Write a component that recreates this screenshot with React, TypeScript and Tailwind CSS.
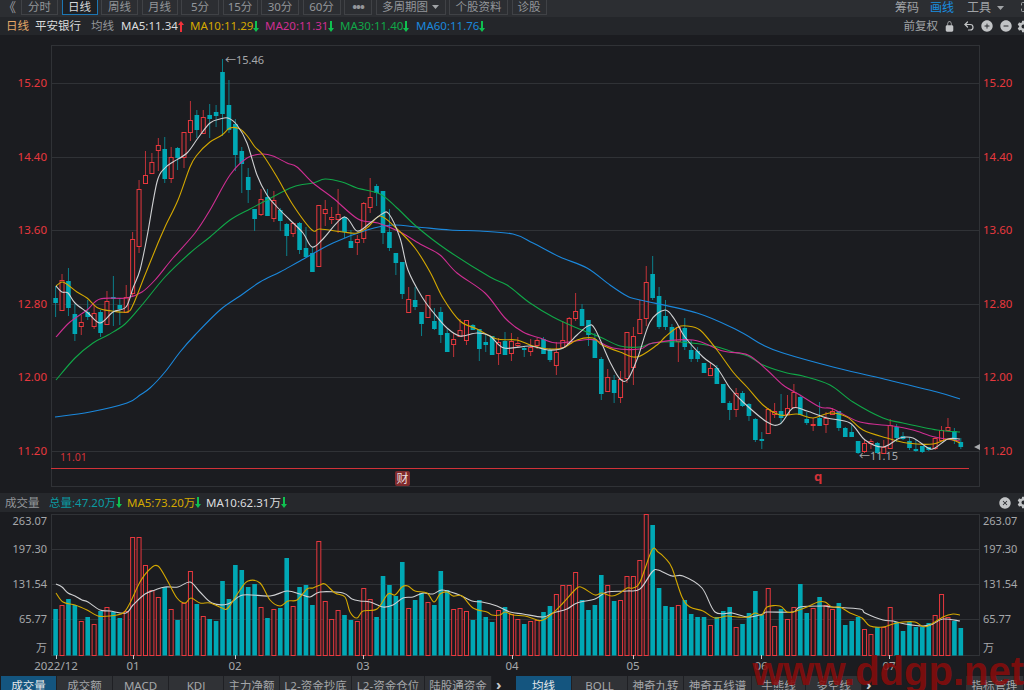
import { FC, ReactNode } from "react";
import { Maximize, Undo2 } from "lucide-react";
import {
  IoAddCircle,
  IoCloseCircle,
  IoLockClosed,
  IoRemoveCircle,
  IoSettingsSharp,
} from "react-icons/io5";

type Pt = [number, number];

const RED = "#e8383e";
const CYAN = "#00a8b5";
const CYAN_WICK = "#0b7f8a";
const BG = "#1b1c20";
const FONT = { fontFamily: '"Noto Sans","Noto Sans CJK SC",sans-serif' };

const barX = (i: number) => 55.6 + 6.42 * i;

// high, body top, body bottom, low, 1 = up (red)
const candles: [number, number, number, number, number][] = [
  [286, 298, 303, 317, 0], [274, 280, 310, 310, 1], [268, 281, 308, 316, 0], [304, 314, 334, 341, 0],
  [315, 322, 326, 335, 1], [300, 312, 317, 320, 0], [305, 313, 326, 329, 1], [310, 312, 333, 337, 0],
  [291, 301, 324, 324, 1], [276, 297, 299, 326, 0], [298, 305, 309, 325, 0], [285, 297, 312, 312, 1],
  [232, 239, 293, 297, 1], [180, 189, 246, 253, 1], [151, 175, 183, 184, 1], [153, 162, 173, 174, 1],
  [138, 145, 150, 171, 1], [137, 149, 179, 183, 0], [147, 157, 178, 183, 1], [147, 148, 158, 170, 0],
  [132, 132, 157, 168, 1], [101, 120, 132, 141, 1], [110, 115, 130, 138, 0], [110, 117, 133, 134, 1],
  [104, 115, 119, 138, 0], [105, 112, 116, 127, 0], [59, 72, 114, 136, 0], [80, 105, 130, 133, 0],
  [119, 124, 155, 171, 0], [147, 151, 164, 193, 0], [168, 177, 190, 203, 0], [209, 209, 219, 231, 0],
  [189, 199, 214, 216, 1], [189, 197, 216, 216, 0], [191, 200, 218, 222, 1], [208, 210, 221, 231, 0],
  [223, 224, 236, 256, 0], [222, 223, 233, 237, 1], [222, 223, 250, 254, 0], [227, 248, 257, 257, 0],
  [247, 253, 272, 272, 0], [205, 205, 266, 266, 1], [200, 209, 213, 226, 1], [207, 217, 219, 224, 1],
  [189, 214, 219, 233, 1], [216, 217, 232, 238, 0], [230, 241, 248, 248, 0], [235, 239, 242, 255, 1],
  [202, 203, 238, 243, 1], [178, 197, 207, 213, 1], [184, 186, 193, 206, 0], [191, 191, 233, 244, 0],
  [209, 232, 248, 251, 0], [253, 253, 263, 275, 0], [262, 262, 294, 299, 0], [287, 299, 312, 312, 1],
  [287, 300, 307, 310, 0], [312, 312, 324, 336, 0], [295, 295, 317, 317, 1], [308, 321, 329, 330, 0],
  [307, 312, 335, 343, 0], [329, 333, 352, 352, 0], [333, 339, 344, 357, 1], [319, 330, 336, 336, 1],
  [320, 320, 340, 345, 1], [324, 325, 330, 330, 0], [329, 329, 349, 361, 0], [335, 342, 345, 352, 0],
  [336, 336, 355, 355, 0], [338, 342, 353, 365, 1], [332, 341, 355, 355, 0], [333, 341, 353, 361, 1],
  [337, 343, 345, 348, 1], [347, 348, 350, 357, 0], [339, 347, 351, 356, 1], [338, 340, 345, 349, 1],
  [337, 339, 354, 354, 0], [348, 350, 360, 362, 0], [342, 352, 365, 375, 1], [321, 340, 347, 347, 1],
  [317, 318, 343, 343, 1], [293, 311, 318, 321, 1], [304, 309, 326, 326, 0], [320, 320, 335, 346, 0],
  [333, 339, 358, 358, 0], [357, 359, 394, 400, 0], [369, 377, 391, 391, 1], [375, 380, 393, 403, 0],
  [371, 379, 397, 403, 1], [332, 332, 378, 383, 1], [327, 336, 367, 385, 1], [300, 319, 333, 334, 1],
  [266, 282, 318, 326, 1], [256, 274, 298, 300, 0], [287, 296, 327, 329, 0], [300, 316, 327, 330, 0],
  [324, 327, 347, 347, 0], [327, 327, 341, 362, 1], [318, 328, 347, 350, 0], [340, 350, 359, 362, 0],
  [347, 351, 359, 362, 0], [363, 363, 373, 373, 0], [363, 368, 375, 375, 1], [365, 368, 384, 384, 0],
  [384, 384, 403, 403, 0], [401, 403, 410, 420, 0], [388, 393, 409, 417, 1], [391, 393, 406, 407, 0],
  [403, 404, 416, 421, 0], [418, 419, 440, 442, 0], [432, 439, 441, 449, 0], [408, 409, 433, 434, 1],
  [403, 411, 414, 418, 1], [394, 411, 418, 424, 0], [395, 408, 414, 414, 1], [384, 392, 407, 407, 1],
  [395, 397, 415, 415, 0], [412, 419, 423, 425, 0], [418, 424, 425, 431, 1], [402, 418, 426, 426, 0],
  [412, 418, 424, 433, 1], [408, 411, 414, 414, 1], [411, 411, 428, 431, 0], [427, 428, 437, 437, 0],
  [425, 432, 437, 437, 0], [441, 441, 453, 454, 0], [440, 443, 451, 453, 1], [439, 441, 443, 449, 1],
  [442, 443, 453, 453, 0], [440, 447, 453, 454, 1], [419, 425, 448, 448, 1], [424, 427, 438, 442, 0],
  [432, 436, 439, 440, 0], [437, 441, 448, 450, 0], [440, 449, 451, 452, 0], [446, 446, 452, 453, 0],
  [447, 447, 450, 451, 0], [437, 438, 448, 450, 1], [426, 430, 440, 440, 1], [418, 427, 430, 430, 1],
  [428, 431, 440, 444, 0], [438, 442, 447, 449, 0],
];

const ma5: Pt[] = [
  [56, 286], [62, 292], [68, 293], [75, 303], [88, 313], [100, 323], [113, 312], [126, 307], [133, 288], [140, 270],
  [147, 237], [157, 182], [165, 168], [173, 162], [187, 153], [198, 138], [210, 123], [220, 119], [228, 118], [237, 125],
  [247, 143], [257, 175], [267, 195], [277, 207], [290, 220], [303, 233], [312, 247], [323, 239], [344, 217], [357, 231],
  [370, 223], [382, 214], [389, 214], [400, 238], [408, 270], [422, 297], [433, 312], [447, 328], [460, 336], [477, 333],
  [490, 336], [504, 348], [530, 346], [548, 350], [563, 348], [577, 335], [588, 326], [595, 329], [610, 362], [620, 379],
  [628, 379], [638, 357], [650, 322], [665, 310], [675, 320], [685, 337], [703, 357], [717, 368], [730, 388], [743, 402],
  [767, 422], [780, 424], [793, 408], [807, 411], [827, 418], [850, 423], [865, 440], [883, 447], [900, 438], [913, 438],
  [928, 448], [935, 448], [948, 439], [960, 439],
];
const ma10: Pt[] = [
  [56, 286], [62, 282], [68, 285], [77, 292], [87, 298], [98, 308], [112, 311], [127, 312], [133, 305], [145, 275],
  [158, 243], [165, 227], [178, 200], [190, 167], [197, 155], [210, 142], [222, 135], [230, 128], [240, 129], [248, 137],
  [255, 147], [263, 155], [277, 177], [293, 205], [312, 230], [320, 229], [343, 232], [357, 233], [368, 227], [380, 216],
  [395, 227], [415, 248], [430, 272], [443, 298], [460, 321], [477, 329], [497, 339], [517, 340], [533, 346], [550, 349],
  [563, 348], [577, 340], [593, 338], [602, 345], [620, 352], [637, 357], [657, 345], [665, 337], [678, 327], [687, 326],
  [700, 330], [717, 350], [733, 372], [747, 387], [763, 405], [780, 415], [797, 414], [813, 418], [830, 413], [847, 417],
  [863, 430], [887, 438], [907, 443], [933, 444], [948, 439], [960, 443],
];
const ma20: Pt[] = [
  [56, 337], [70, 322], [87, 310], [100, 299], [127, 298], [142, 292], [155, 280], [173, 258], [195, 233], [210, 210],
  [230, 175], [247, 158], [262, 154], [273, 156], [287, 163], [297, 167], [313, 183], [333, 198], [358, 219], [378, 223],
  [400, 232], [422, 245], [440, 255], [457, 273], [485, 293], [505, 318], [523, 332], [540, 338], [557, 343], [583, 340],
  [595, 340], [613, 348], [640, 349], [653, 343], [693, 340], [723, 351], [748, 355], [767, 370], [783, 385], [800, 395],
  [820, 407], [833, 409], [860, 422], [893, 426], [913, 430], [935, 437], [960, 441],
];
const ma30: Pt[] = [
  [56, 380], [75, 358], [93, 343], [108, 335], [125, 324], [142, 305], [165, 277], [190, 253], [210, 237], [230, 220],
  [250, 209], [267, 200], [293, 187], [313, 183], [325, 179], [342, 182], [357, 188], [380, 194], [397, 208], [417, 227],
  [447, 250], [490, 277], [507, 285], [530, 303], [553, 317], [577, 328], [600, 337], [620, 346], [640, 347], [653, 343],
  [680, 342], [713, 346], [733, 352], [748, 356], [763, 365], [787, 373], [803, 376], [830, 385], [853, 402], [883, 418],
  [903, 423], [937, 430], [960, 432],
];
const ma60: Pt[] = [
  [55, 417], [90, 412], [127, 403], [140, 395], [150, 388], [165, 372], [180, 352], [195, 335], [220, 310], [240, 296],
  [260, 282], [280, 272], [300, 261], [333, 243], [367, 230], [393, 225], [417, 227], [450, 230], [480, 231], [513, 234],
  [533, 243], [560, 257], [587, 268], [610, 285], [627, 296], [640, 300], [697, 313], [737, 330], [763, 345], [783, 353],
  [833, 367], [880, 378], [937, 392], [960, 399],
];

// top of bar, 1 = red
const volumes: [number, number][] = [
  [609, 0], [605, 1], [599, 0], [605, 0], [621, 1], [617, 0], [624, 1], [611, 0], [607, 1], [612, 0],
  [618, 0], [611, 1], [537, 1], [537, 1], [565, 1], [590, 1], [597, 1], [587, 0], [609, 1], [620, 0],
  [603, 1], [571, 1], [604, 0], [616, 1], [619, 0], [621, 0], [581, 0], [599, 0], [565, 0], [570, 0],
  [587, 0], [584, 0], [607, 1], [618, 0], [609, 1], [608, 0], [558, 0], [606, 1], [587, 0], [585, 0],
  [605, 0], [541, 1], [601, 1], [619, 1], [610, 1], [615, 0], [620, 0], [621, 1], [588, 1], [599, 1],
  [617, 0], [576, 0], [585, 0], [596, 0], [562, 0], [608, 1], [600, 0], [593, 0], [602, 1], [605, 0],
  [571, 0], [590, 0], [609, 1], [608, 1], [611, 1], [620, 0], [600, 0], [617, 0], [622, 0], [610, 1],
  [607, 0], [614, 1], [619, 1], [624, 0], [621, 1], [620, 1], [612, 0], [606, 0], [594, 1], [585, 1],
  [585, 1], [572, 1], [600, 0], [610, 0], [605, 0], [575, 0], [585, 1], [601, 0], [600, 1], [576, 1],
  [576, 1], [560, 1], [514, 1], [525, 0], [588, 0], [606, 0], [607, 0], [605, 1], [600, 0], [614, 0],
  [617, 0], [617, 0], [625, 1], [617, 0], [611, 0], [607, 0], [627, 1], [624, 0], [613, 0], [591, 0],
  [615, 0], [588, 1], [626, 1], [609, 0], [619, 1], [607, 1], [584, 0], [613, 0], [608, 1], [597, 0],
  [605, 1], [609, 1], [603, 0], [625, 0], [621, 0], [617, 0], [629, 1], [634, 1], [627, 0], [627, 1],
  [607, 1], [622, 0], [631, 0], [622, 0], [627, 0], [627, 0], [623, 0], [615, 1], [594, 1], [617, 1],
  [621, 0], [628, 0],
];

const volMa5: Pt[] = [
  [56, 593], [63, 602], [75, 605], [87, 610], [98, 616], [110, 616], [123, 613], [130, 603], [140, 582], [150, 569],
  [158, 566], [167, 580], [177, 598], [185, 603], [191, 598], [200, 603], [210, 603], [222, 608], [228, 608], [240, 590],
  [248, 581], [260, 583], [270, 600], [280, 606], [288, 601], [297, 600], [307, 589], [313, 588], [320, 585], [325, 584],
  [335, 593], [345, 597], [350, 612], [357, 618], [363, 611], [377, 609], [388, 594], [395, 595], [402, 587], [408, 586],
  [415, 591], [427, 593], [434, 602], [440, 594], [447, 592], [453, 596], [462, 596], [473, 608], [487, 612], [492, 615],
  [500, 615], [505, 612], [513, 615], [525, 616], [537, 620], [543, 620], [553, 613], [563, 603], [577, 588], [583, 588],
  [595, 595], [602, 593], [612, 596], [620, 593], [627, 588], [633, 588], [640, 582], [652, 550], [658, 552], [665, 558],
  [672, 568], [682, 597], [690, 607], [703, 611], [715, 618], [727, 616], [737, 617], [748, 617], [755, 613], [762, 615],
  [767, 607], [780, 606], [787, 612], [793, 612], [807, 607], [818, 602], [825, 602], [832, 607], [840, 607], [850, 613],
  [862, 618], [870, 626], [883, 627], [893, 624], [903, 622], [915, 622], [922, 626], [928, 626], [943, 617], [953, 614],
  [960, 615],
];
const volMa10: Pt[] = [
  [56, 584], [62, 587], [68, 593], [75, 596], [82, 600], [88, 602], [100, 610], [110, 611], [126, 613], [133, 605],
  [145, 594], [155, 590], [165, 587], [178, 587], [190, 582], [200, 592], [212, 603], [228, 604], [243, 595], [270, 596],
  [287, 591], [300, 594], [310, 597], [320, 592], [343, 593], [352, 599], [360, 601], [370, 602], [383, 607], [393, 605],
  [403, 598], [413, 597], [423, 593], [433, 594], [442, 590], [457, 594], [472, 601], [482, 602], [497, 606], [510, 612],
  [523, 614], [543, 617], [553, 613], [567, 609], [577, 603], [595, 599], [607, 592], [627, 591], [640, 589], [652, 572],
  [658, 570], [672, 576], [683, 576], [702, 588], [715, 612], [732, 613], [748, 617], [763, 614], [767, 612], [793, 612],
  [800, 607], [823, 606], [832, 607], [860, 609], [865, 613], [883, 620], [893, 621], [905, 624], [923, 626], [933, 624],
  [943, 619], [960, 621],
];

const priceLabels: [string, number][] = [
  ["15.20", 83], ["14.40", 157], ["13.60", 230], ["12.80", 304], ["12.00", 377], ["11.20", 451],
];
const volumeLabels: [string, number][] = [
  ["263.07", 521], ["197.30", 549], ["131.54", 584], ["65.77", 619], ["万", 648],
];
const dates: [string, number][] = [
  ["2022/12", 56], ["01", 133], ["02", 235], ["03", 363], ["04", 512], ["05", 633], ["06", 761], ["07", 889],
];

// catmull-rom through the points so the averages don't look angular
const smooth = (pts: Pt[]) => {
  let d = `M${pts[0][0]} ${pts[0][1]}`;
  for (let i = 0; i < pts.length - 1; i++) {
    const p0 = pts[Math.max(i - 1, 0)];
    const p1 = pts[i];
    const p2 = pts[i + 1];
    const p3 = pts[Math.min(i + 2, pts.length - 1)];
    const c1x = p1[0] + (p2[0] - p0[0]) / 6;
    const c1y = p1[1] + (p2[1] - p0[1]) / 6;
    const c2x = p2[0] - (p3[0] - p1[0]) / 6;
    const c2y = p2[1] - (p3[1] - p1[1]) / 6;
    d += `C${c1x.toFixed(1)} ${c1y.toFixed(1)} ${c2x.toFixed(1)} ${c2y.toFixed(1)} ${p2[0]} ${p2[1]}`;
  }
  return d;
};

const Line: FC<{ points: Pt[]; color: string }> = ({ points, color }) => (
  <path d={smooth(points)} fill="none" stroke={color} strokeWidth={1.1} strokeLinejoin="round" />
);

const Arrow: FC<{ up?: boolean }> = ({ up }) => (
  <svg width="6" height="11" viewBox="0 0 6 11" className="shrink-0">
    <path
      d={up ? "M3 0 6 4H4V11H2V4H0Z" : "M2 0H4V7H6L3 11 0 7H2Z"}
      fill={up ? "#f0323a" : "#0fc050"}
    />
  </svg>
);

const ToolButton: FC<{ w: string; active?: boolean; children: ReactNode }> = ({ w, active, children }) => (
  <div
    className={`${w} flex h-[15px] shrink-0 items-center justify-center gap-1 border border-t-0 ${
      active ? "border-[#1c76b3] bg-[#1d2024] text-[#d6d8da]" : "border-[#404246] text-[#93969a]"
    }`}
  >
    {children}
  </div>
);

const Tab: FC<{ w: string; active?: boolean; children: ReactNode }> = ({ w, active, children }) => (
  <div
    className={`${w} h-[18px] shrink-0 border-r border-[#1f2024] pt-[1px] text-center leading-[18px] ${
      active ? "bg-[#14557f] text-[#e6e8ea]" : "bg-[#303236] text-[#a4a6a9]"
    }`}
  >
    {children}
  </div>
);

const Toolbar = () => (
  <div className="flex h-[17px] items-start bg-[#2c2e32] text-[11.5px] leading-none">
    <span className="ml-[3px] w-[18px] shrink-0 text-[13px] leading-[14px] text-[#9a9da1]">《</span>
    <div className="flex gap-[3.5px]">
      <ToolButton w="w-[37px]">分时</ToolButton>
      <ToolButton w="w-[36px]" active>日线</ToolButton>
      <ToolButton w="w-[37px]">周线</ToolButton>
      <ToolButton w="w-[36px]">月线</ToolButton>
      <ToolButton w="w-[38px]">5分</ToolButton>
      <ToolButton w="w-[35px]">15分</ToolButton>
      <ToolButton w="w-[38px]">30分</ToolButton>
      <ToolButton w="w-[38px]">60分</ToolButton>
      <ToolButton w="w-[28px]">
        <span className="text-[13px] font-bold leading-none tracking-[-1px]">•••</span>
      </ToolButton>
      <ToolButton w="w-[70px]">
        多周期图
        <svg width="7" height="4" viewBox="0 0 7 4"><path d="M0 0H7L3.5 4Z" fill="#a0a3a6" /></svg>
      </ToolButton>
      <ToolButton w="w-[59px]">个股资料</ToolButton>
      <ToolButton w="w-[35px]">诊股</ToolButton>
    </div>
    <div className="ml-auto flex items-center text-[12px] text-[#a0a3a6]">
      <span className="mr-[11px] leading-[15px]">筹码</span>
      <span className="mr-[13px] leading-[15px] text-[#1a8fe0]">画线</span>
      <span className="leading-[15px]">工具</span>
      <svg width="7" height="4" viewBox="0 0 7 4" className="ml-[6px] mr-[16px]"><path d="M0 0H7L3.5 4Z" fill="#a0a3a6" /></svg>
      <Maximize size={12} className="-mr-[8px] -mt-[2px]" />
    </div>
  </div>
);

const InfoBar = () => (
  <div className="flex h-[18px] items-center bg-[#24262a] pl-[6px] text-[11.5px] leading-none">
    <span className="w-[29px] text-[#e4a868]">日线</span>
    <span className="w-[56px] text-[#dadcdd]">平安银行</span>
    <span className="w-[30px] text-[#94979b]">均线</span>
    <span className="flex w-[69px] items-center text-[#dcdddf]">MA5:11.34<Arrow up /></span>
    <span className="flex w-[75px] items-center text-[#d4a800]">MA10:11.29<Arrow /></span>
    <span className="flex w-[75px] items-center text-[#cf2e92]">MA20:11.31<Arrow /></span>
    <span className="flex w-[76px] items-center text-[#10a848]">MA30:11.40<Arrow /></span>
    <span className="flex w-[76px] items-center text-[#1b88dc]">MA60:11.76<Arrow /></span>
    <div className="ml-auto flex items-center text-[#a0a3a6]">
      <span className="mr-[6px]">前复权</span>
      <IoLockClosed size={11} className="mr-[8px] text-[#c2c4c6]" />
      <Undo2 size={12} strokeWidth={2.4} className="mr-[5px] text-[#c2c4c6]" />
      <IoAddCircle size={14} className="mr-[5px] text-[#c2c4c6]" />
      <IoRemoveCircle size={14} className="mr-[4px] text-[#c2c4c6]" />
      <IoSettingsSharp size={13} className="-mr-[6px] text-[#c2c4c6]" />
    </div>
  </div>
);

const PriceChart = () => (
  <svg viewBox="0 35 1024 458" width="1024" height="458" className="block" style={FONT}>
    <rect x="0" y="35" width="1024" height="458" fill={BG} />
    <rect x="51.5" y="45.5" width="928" height="441" fill="none" stroke="#303236" />
    {priceLabels.map(([label, y]) => (
      <g key={label}>
        <line x1="51" x2="979" y1={y + 0.5} y2={y + 0.5} stroke="#303236" />
        <text x="47" y={y + 4} textAnchor="end" fontSize="11.5" fill="#e8383e">{label}</text>
        <text x="983" y={y + 4} fontSize="11.5" fill="#e8383e">{label}</text>
      </g>
    ))}
    {candles.map(([high, top, bottom, low, up], i) => {
      const x = barX(i);
      return up ? (
        <g key={i} stroke={RED}>
          {top > high && <line x1={x} x2={x} y1={high} y2={top} opacity={0.8} />}
          {low > bottom && <line x1={x} x2={x} y1={bottom} y2={low} opacity={0.8} />}
          <rect x={x - 2} y={top + 0.5} width={4} height={Math.max(bottom - top, 1)} fill={BG} />
        </g>
      ) : (
        <g key={i}>
          <line x1={x} x2={x} y1={high} y2={low} stroke={CYAN_WICK} />
          <rect x={x - 2.3} y={top} width={4.6} height={Math.max(bottom - top, 1)} fill={CYAN} />
        </g>
      );
    })}
    <Line points={ma60} color="#1b88dc" />
    <Line points={ma30} color="#10a848" />
    <Line points={ma20} color="#cf2e92" />
    <Line points={ma10} color="#d4a800" />
    <Line points={ma5} color="#cfd0d2" />
    <text x="225" y="64" fontSize="11" fill="#a6a8ab">←15.46</text>
    <text x="859" y="460" fontSize="11" fill="#a6a8ab">←11.15</text>
    <text x="60" y="461" fontSize="10.5" fill="#d23238">11.01</text>
    <line x1="51" x2="969" y1="468.5" y2="468.5" stroke="#d23238" />
    <rect x="395" y="471" width="15" height="15" rx="2" fill="#7f2a2c" />
    <text x="402.5" y="483" textAnchor="middle" fontSize="12" fill="#e8dcdc">财</text>
    <text x="818" y="481" textAnchor="middle" fontSize="13" fontWeight="700" fill="#d23238">q</text>
    <path d="M980 444 974 447 980 450Z" fill="#a6a8ab" />
  </svg>
);

const VolumeHeader = () => (
  <div className="flex h-[19px] items-center bg-[#26282c] pl-[5px] text-[11.5px] leading-none">
    <span className="w-[44px] text-[#94979b]">成交量</span>
    <span className="flex w-[78px] items-center text-[#0a9aa2]">总量:47.20万<Arrow /></span>
    <span className="flex w-[79px] items-center text-[#d4a800]">MA5:73.20万<Arrow /></span>
    <span className="flex items-center text-[#dcdddf]">MA10:62.31万<Arrow /></span>
    <div className="ml-auto flex items-center text-[#c2c4c6]">
      <IoCloseCircle size={14} className="mr-[5px]" />
      <IoSettingsSharp size={13} className="-mr-[6px]" />
    </div>
  </div>
);

const VolumeChart = () => (
  <svg viewBox="0 512 1024 164" width="1024" height="164" className="block" style={FONT}>
    <rect x="0" y="512" width="1024" height="164" fill={BG} />
    <rect x="51.5" y="514.5" width="928" height="141" fill="none" stroke="#303236" />
    {volumeLabels.map(([label, y]) => (
      <g key={label}>
        {label !== "万" && label !== "263.07" && (
          <line x1="51" x2="979" y1={y + 0.5} y2={y + 0.5} stroke="#303236" />
        )}
        <text x="47" y={y + 4} textAnchor="end" fontSize="11" fill="#a6a8ab">{label}</text>
        <text x="983" y={y + 4} fontSize="11" fill="#a6a8ab">{label}</text>
      </g>
    ))}
    {volumes.map(([top, up], i) => {
      const x = barX(i);
      return up ? (
        <rect key={i} x={x - 2} y={top + 0.5} width={4} height={655 - top} fill={BG} stroke={RED} />
      ) : (
        <rect key={i} x={x - 2.3} y={top} width={4.6} height={655.5 - top} fill={CYAN} />
      );
    })}
    <Line points={volMa10} color="#cfd0d2" />
    <Line points={volMa5} color="#d4a800" />
    {dates.map(([label, x]) => (
      <g key={label}>
        <line x1={x + 0.5} x2={x + 0.5} y1="655" y2="659" stroke="#c8c8c8" />
        <text x={x} y="670" textAnchor="middle" fontSize="11.5" fill="#a6a8ab">{label}</text>
      </g>
    ))}
  </svg>
);

const Tabs = () => (
  <div className="flex h-[14px] overflow-hidden bg-[#1b1c20] pl-[1px] text-[11.5px]">
    <Tab w="w-[56px]" active>成交量</Tab>
    <Tab w="w-[56px]">成交额</Tab>
    <Tab w="w-[56px]">MACD</Tab>
    <Tab w="w-[55px]">KDJ</Tab>
    <Tab w="w-[56px]">主力净额</Tab>
    <Tab w="w-[72px]">L2-资金抄底</Tab>
    <Tab w="w-[73px]">L2-资金仓位</Tab>
    <Tab w="w-[67px]">陆股通资金</Tab>
    <span className="w-[24px] shrink-0 pl-[4px] text-[15px] font-bold leading-[16px] text-[#c8cacc]">›</span>
    <Tab w="w-[56px]" active>均线</Tab>
    <Tab w="w-[56px]">BOLL</Tab>
    <Tab w="w-[56px]">神奇九转</Tab>
    <Tab w="w-[68px]">神奇五线谱</Tab>
    <Tab w="w-[54px]">牛熊线</Tab>
    <Tab w="w-[56px]">多空线</Tab>
    <span className="w-[104px] shrink-0 pl-[4px] text-[15px] font-bold leading-[16px] text-[#c8cacc]">›</span>
    <Tab w="w-[58px]">指标管理</Tab>
  </div>
);

export default function App() {
  return (
    <div className="relative h-[690px] w-[1024px] overflow-hidden bg-[#1b1c20]" style={FONT}>
      <Toolbar />
      <InfoBar />
      <PriceChart />
      <VolumeHeader />
      <VolumeChart />
      <Tabs />
      <div className="pointer-events-none absolute bottom-[-1px] right-0 font-['Liberation_Sans'] text-[40px] font-bold leading-[40px] text-[#860c0c]/90">
        www.ddgp.net
      </div>
    </div>
  );
}
